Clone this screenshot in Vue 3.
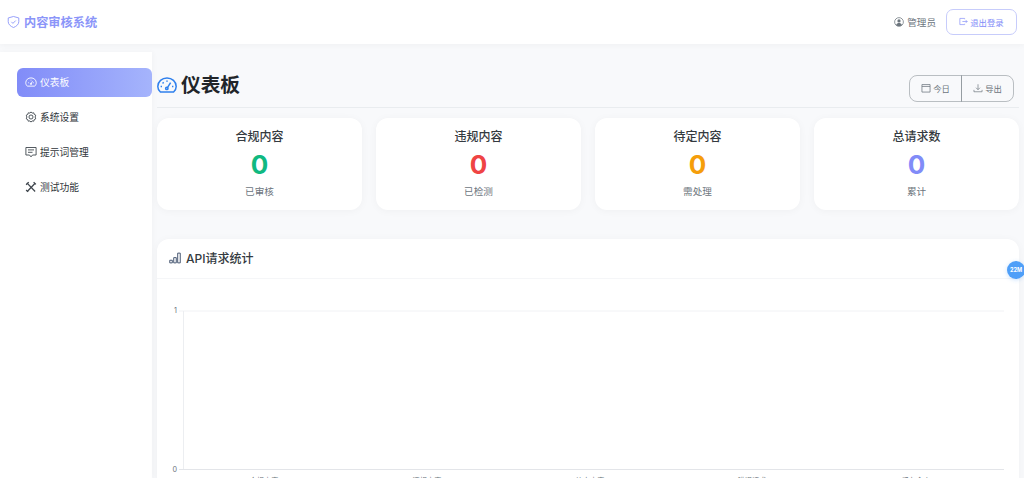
<template>
  <div class="app">
    <header class="topbar">
      <div class="brand">
        <svg class="brand-icon" viewBox="0 0 16 16" fill="none" stroke="currentColor" stroke-width="1.100">
          <path d="M8 1.200 14.500 3v4.600c0 3.400-3 5.800-6.500 7.200-3.500-1.400-6.500-3.800-6.500-7.200V3z" />
          <path d="M5.400 7.800 7.300 9.700 10.800 6.200" />
        </svg>
        <span>内容审核系统</span>
      </div>
      <div class="user-area">
        <span class="user">
          <svg viewBox="0 0 16 16" class="user-icon">
            <circle cx="8" cy="8" r="7" fill="none" stroke="currentColor" stroke-width="1.200" />
            <circle cx="8" cy="6.200" r="2.600" fill="currentColor" />
            <path d="M3.400 12.600c.8-2.200 2.600-3.200 4.600-3.200s3.800 1 4.600 3.200A6.500 6.500 0 0 1 8 14.500a6.500 6.500 0 0 1-4.600-1.900z" fill="currentColor" />
          </svg>
          管理员
        </span>
        <button class="logout">
          <svg viewBox="0 0 16 16" fill="none" stroke="currentColor" stroke-width="1.200">
            <path d="M10 4V2.500H1.500v11H10V12" />
            <path d="M6 8h8.500M12 5.500 14.500 8 12 10.500" />
          </svg>
          退出登录
        </button>
      </div>
    </header>

    <div class="body">
      <aside class="sidebar">
        <a v-for="item in menu" :key="item.label" class="menu-item" :class="{ active: item.active }">
          <svg viewBox="0 0 16 16" fill="none" stroke="currentColor" :stroke-width="item.weight || 1.200" class="menu-icon">
            <path v-for="d in item.paths" :key="d" :d="d" />
          </svg>
          {{ item.label }}
        </a>
      </aside>

      <main class="content">
        <div class="page-head">
          <h1 class="page-title">
            <svg viewBox="0 0 20 16" fill="none" stroke="#2f80ed" stroke-width="1.500" class="title-icon">
              <path d="M3.400 15h13.200c1.500-1.400 2.600-3.400 2.600-5.600C19.200 4.600 15 1 10 1S.8 4.600.8 9.400c0 2.200 1.100 4.200 2.600 5.600z" />
              <path d="M10.300 10.800 13.600 5.600" />
              <circle cx="9.800" cy="11.400" r="1.200" />
              <path d="M3.600 9.600h1.400M5.600 5.400l1 1M10 3.400v1.400M16.400 9.600H15" />
            </svg>
            仪表板
          </h1>
          <div class="btn-group">
            <button>
              <svg viewBox="0 0 16 16" fill="none" stroke="currentColor" stroke-width="1.200">
                <path d="M1.500 2.500h13v12h-13zM1.500 5.500h13" />
              </svg>
              今日
            </button>
            <button>
              <svg viewBox="0 0 16 16" fill="none" stroke="currentColor" stroke-width="1.100">
                <path d="M8 2v8.500M4.800 7.500 8 10.700l3.200-3.200M1.500 11v3h13v-3" />
              </svg>
              导出
            </button>
          </div>
        </div>

        <div class="stats">
          <div v-for="s in stats" :key="s.title" class="stat-card">
            <div class="stat-title">{{ s.title }}</div>
            <div class="stat-value" :class="s.tone">0</div>
            <div class="stat-sub">{{ s.sub }}</div>
          </div>
        </div>

        <section class="chart-card">
          <div class="chart-head">
            <svg viewBox="0 0 16 16" fill="none" stroke="#44546f" stroke-width="1.300" class="chart-icon">
              <path d="M1 11h3.400v3.500H1zM6.300 7.500h3.400v7H6.300zM11.600 1.500H15v13h-3.400z" />
            </svg>
            API请求统计
          </div>
          <div class="chart-body">
            <svg class="chart" width="862" height="200" viewBox="0 0 862 200">
              <line x1="22" y1="33" x2="847" y2="33" stroke="#f1f2f5" />
              <line x1="26.500" y1="33" x2="26.500" y2="192" stroke="#eceef1" />
              <line x1="22" y1="191.500" x2="847" y2="191.500" stroke="#e3e5e9" />
              <text x="20" y="35" text-anchor="end" class="tick">1</text>
              <text x="20" y="194" text-anchor="end" class="tick">0</text>
              <text v-for="t in ticks" :key="t.x" :x="t.x" y="205" text-anchor="middle" class="tick">{{ t.label }}</text>
            </svg>
          </div>
        </section>
      </main>
    </div>

    <div class="float-badge">22M</div>
  </div>
</template>

<script setup>
const menu = [
  {
    label: '仪表板',
    active: true,
    paths: ['M3 13.500h10c1.100-1.100 2-2.700 2-4.500C15 5.300 11.900 2.500 8 2.500S1 5.300 1 9c0 1.800.9 3.400 2 4.500z', 'M8 10.500l2-3.500', 'M4 9h1M11 9h1M8 5v1', 'M8.900 10.500a.9.900 0 1 1-1.800 0 .9.900 0 0 1 1.800 0z']
  },
  {
    label: '系统设置',
    paths: ['M8 1.200l1.500 1.600 2.200-.4.600 2.100 2 1-.8 2.500.8 2.500-2 1-.6 2.100-2.200-.4L8 14.800l-1.500-1.600-2.200.4-.6-2.100-2-1 .8-2.500-.8-2.500 2-1 .6-2.100 2.200.4z', 'M10.700 8a2.700 2.700 0 1 1-5.400 0 2.700 2.700 0 0 1 5.400 0z']
  },
  {
    label: '提示词管理',
    paths: ['M1.200 2h13.600v10h-4.800L8 14.500 6 12H1.200z', 'M4 5.200h8M4 8.400h6']
  },
  {
    label: '测试功能',
    weight: 1.700,
    paths: ['M2.500 2.500 13.500 14', 'M13.500 3 3 14', 'M1.500 5 5 1.500M11.500 1.500l3 3M1.500 12l2.500 2.500']
  }
]

const stats = [
  { title: '合规内容', sub: '已审核', tone: 'green' },
  { title: '违规内容', sub: '已检测', tone: 'red' },
  { title: '待定内容', sub: '需处理', tone: 'orange' },
  { title: '总请求数', sub: '累计', tone: 'indigo' }
]

const ticks = [
  { x: 107, label: '合规内容' },
  { x: 270, label: '违规内容' },
  { x: 433, label: '待定内容' },
  { x: 595, label: '错误请求' },
  { x: 759, label: '缓存命中' }
]
</script>

<style>
html, body { margin: 0; height: 100%; overflow: hidden; background: #f8f9fb; }
</style>

<style scoped>
.app {
  position: relative;
  height: 478px;
  overflow: hidden;
  font-family: Inter, "Noto Sans CJK SC", sans-serif;
  color: #212529;
  background: #f8f9fb;
}

.topbar {
  height: 44px;
  box-sizing: border-box;
  display: flex;
  justify-content: space-between;
  align-items: center;
  padding: 0 7px;
  background: #fff;
  box-shadow: 0 1px 6px rgba(0, 0, 0, .04);
}
.brand { display: flex; align-items: center; gap: 4px; font-size: 12.200px; font-weight: 700; color: #8b95f9; }
.brand-icon { width: 13px; height: 14px; }
.user-area { display: flex; align-items: center; gap: 10px; }
.user { display: flex; align-items: center; gap: 3px; font-size: 9.600px; color: #6c757d; }
.user-icon { width: 10px; height: 10px; color: #6c757d; }
.logout {
  width: 71px;
  height: 26px;
  box-sizing: border-box;
  display: flex;
  align-items: center;
  justify-content: center;
  gap: 2px;
  padding: 0 0 1px;
  border: 1px solid #c7ccfb;
  border-radius: 7px;
  background: #fff;
  color: #818cf8;
  font: inherit;
  font-size: 8.400px;
}
.logout svg { width: 9px; height: 9px; }

.body { display: flex; padding-top: 8px; height: 426px; }
.sidebar {
  width: 152px;
  flex: none;
  box-sizing: border-box;
  padding: 16px 0 0 17px;
  display: flex;
  flex-direction: column;
  gap: 6px;
  background: #fff;
  box-shadow: 1px 0 6px rgba(0, 0, 0, .03);
}
.menu-item {
  height: 29px;
  box-sizing: border-box;
  display: flex;
  align-items: center;
  gap: 3px;
  padding: 0 0 2px 8px;
  border-radius: 6px;
  font-size: 9.750px;
  color: #2f353a;
}
.menu-icon { width: 12px; height: 12px; color: #40474e; }
.menu-item.active {
  background: linear-gradient(90deg, #818cf8, #a5b4fc);
  color: #fff;
}
.menu-item.active .menu-icon { color: #fff; }

.content { flex: 1; min-width: 0; padding: 16px 5px 0; }
.page-head {
  height: 39px;
  display: flex;
  justify-content: space-between;
  align-items: flex-start;
  padding-right: 5px;
  border-bottom: 1px solid #e9ecef;
}
.page-title {
  display: flex;
  align-items: center;
  gap: 4px;
  margin: 0;
  padding-top: 4px;
  font-size: 19.700px;
  line-height: 26px;
  font-weight: 700;
}
.title-icon { width: 20px; height: 16px; }
.btn-group { display: flex; margin-top: 7px; }
.btn-group button {
  height: 27px;
  width: 53px;
  box-sizing: border-box;
  display: flex;
  align-items: center;
  justify-content: center;
  gap: 2px;
  padding: 0 0 2px;
  border: 1px solid rgba(108, 117, 125, .45);
  background: transparent;
  color: #6c757d;
  font: inherit;
  font-size: 8.400px;
}
.btn-group button:first-child { border-radius: 8px 0 0 8px; }
.btn-group button:last-child { border-radius: 0 8px 8px 0; margin-left: -1px; }
.btn-group svg { width: 10px; height: 10px; }

.stats { display: grid; grid-template-columns: repeat(4, 205px); gap: 14px; margin-top: 10px; }
.stat-card {
  height: 92px;
  box-sizing: border-box;
  padding-top: 11px;
  text-align: center;
  background: #fff;
  border-radius: 12px;
  box-shadow: 0 1px 8px rgba(0, 0, 0, .04);
}
.stat-title { font-size: 12px; line-height: 16px; font-weight: 500; color: #343a40; }
.stat-value { font-size: 26px; line-height: 30px; font-weight: 700; margin-top: 5px; }
.stat-sub { font-size: 9.600px; line-height: 14px; color: #6c757d; margin-top: 5px; }
.green { color: #10b981; }
.red { color: #ef4444; }
.orange { color: #f59e0b; }
.indigo { color: #818cf8; }

.chart-card {
  margin-top: 29px;
  height: 300px;
  background: #fff;
  border-radius: 12px;
  box-shadow: 0 1px 8px rgba(0, 0, 0, .04);
}
.chart-head {
  height: 40px;
  box-sizing: border-box;
  display: flex;
  align-items: center;
  gap: 5px;
  padding: 0 0 2px 12px;
  border-bottom: 1px solid #f5f6f8;
  font-size: 12px;
  font-weight: 500;
  color: #343a40;
}
.chart-icon { width: 12px; height: 12px; }
.chart-body { margin-top: -1px; }
.chart { display: block; overflow: visible; }
.tick { font-size: 7.200px; fill: #6c757d; }

.float-badge {
  position: absolute;
  left: 1007px;
  top: 261px;
  width: 18px;
  height: 18px;
  border-radius: 50%;
  display: flex;
  align-items: center;
  justify-content: center;
  background: #4f9ff8;
  color: #fff;
  font-size: 5.500px;
  font-weight: 700;
  box-shadow: 0 1px 4px rgba(79, 159, 248, .3);
}
</style>
